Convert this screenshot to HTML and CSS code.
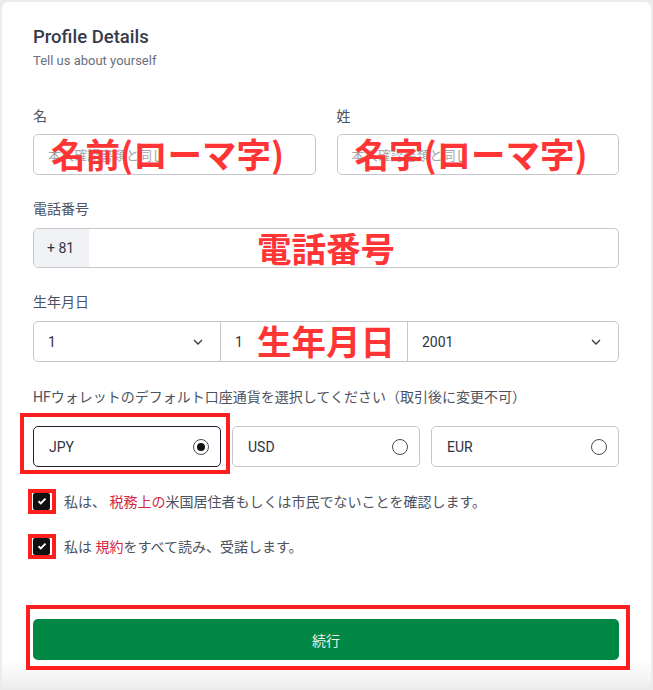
FILE: index.html
```html
<!DOCTYPE html>
<html>
<head>
  <meta charset="utf-8">
  <title>Profile Details</title>
  <link rel="stylesheet" href="styles.css">
</head>
<body>
  <div class="card">
    <h1 class="title">Profile Details</h1>
    <p class="subtitle">Tell us about yourself</p>

    <div class="row names">
      <div class="field">
        <label class="label">名</label>
        <div class="control">
          <span class="placeholder">本人確認書類と同じ</span>
          <span class="note note-first">名前(ローマ字)</span>
        </div>
      </div>
      <div class="field">
        <label class="label">姓</label>
        <div class="control">
          <span class="placeholder">本人確認書類と同じ</span>
          <span class="note note-last">名字(ローマ字)</span>
        </div>
      </div>
    </div>

    <div class="field phone-field">
      <label class="label">電話番号</label>
      <div class="control phone">
        <span class="prefix">+ 81</span>
        <span class="note note-phone">電話番号</span>
      </div>
    </div>

    <div class="field birth-field">
      <label class="label">生年月日</label>
      <div class="control birth">
        <div class="seg"><span>1</span><svg class="chev" viewBox="0 0 10 6"><path d="M1 1l4 4 4-4" /></svg></div>
        <div class="seg"><span>1</span><svg class="chev" viewBox="0 0 10 6"><path d="M1 1l4 4 4-4" /></svg></div>
        <div class="seg"><span>2001</span><svg class="chev" viewBox="0 0 10 6"><path d="M1 1l4 4 4-4" /></svg></div>
        <span class="note note-birth">生年月日</span>
      </div>
    </div>

    <div class="field currency-field">
      <label class="label">HFウォレットのデフォルト口座通貨を選択してください（取引後に変更不可）</label>
      <div class="currencies">
        <div class="option selected"><span>JPY</span><i class="radio"></i><span class="mark mark-jpy"></span></div>
        <div class="option"><span>USD</span><i class="radio"></i></div>
        <div class="option"><span>EUR</span><i class="radio"></i></div>
      </div>
    </div>

    <div class="check-row check-one">
      <span class="box"><svg viewBox="0 0 10 8"><path d="M1.5 4.2l2.3 2.2L8.5 1.6" /></svg><span class="mark mark-check"></span></span>
      <span class="check-text">私は、 <em>税務上の</em>米国居住者もしくは市民でないことを確認します。</span>
    </div>
    <div class="check-row">
      <span class="box"><svg viewBox="0 0 10 8"><path d="M1.5 4.2l2.3 2.2L8.5 1.6" /></svg><span class="mark mark-check"></span></span>
      <span class="check-text">私は <em>規約</em>をすべて読み、受諾します。</span>
    </div>

    <div class="submit-wrap">
      <button class="submit" type="button">続行</button>
      <span class="mark mark-button"></span>
    </div>
  </div>
</body>
</html>
```

FILE: styles.css
```css
* {
  box-sizing: border-box;
}
body {
  margin: 0;
  background-color: #ececec;
  font-family: Roboto, "Noto Sans CJK JP", sans-serif;
  width: 653px;
  height: 690px;
  overflow: hidden;
}
.card {
  margin: 2px 2px 0 2px;
  height: 686px;
  background: linear-gradient(to bottom, #ffffff 96%, #eeeeee 100%);
  border-radius: 6px;
  padding: 24px 32px 0 31px;
}
.title {
  margin: 0;
  font-size: 18.5px;
  font-weight: 500;
  line-height: 22px;
  color: #363a4a;
}
.subtitle {
  margin: 5px 0 0 0;
  font-size: 13px;
  line-height: 16px;
  color: #6a6f7b;
}
.label {
  display: block;
  font-size: 14px;
  line-height: 18px;
  color: #4d5260;
  margin-bottom: 10px;
}
.row {
  display: flex;
  gap: 21px;
}
.names {
  margin-top: 38px;
}
.names .label {
  margin-bottom: 9px;
}
.field {
  flex: 1;
}
.control {
  position: relative;
  height: 41px;
  border: 1px solid #c6c7cb;
  border-radius: 5px;
  display: flex;
  align-items: center;
  font-size: 14px;
  color: #2f3344;
}
.placeholder {
  padding-left: 14px;
  font-size: 13px;
  color: #a3a5ab;
}
.phone-field {
  margin-top: 25px;
}
.phone {
  height: 40px;
}
.prefix {
  width: 55px;
  height: 100%;
  background-color: #f0f2f5;
  border-radius: 4px 0 0 4px;
  display: flex;
  align-items: center;
  padding-left: 13px;
  font-family: Roboto, sans-serif;
}
.birth-field {
  margin-top: 25px;
}
.birth {
  height: 41px;
}
.seg {
  flex: 1;
  height: 100%;
  display: flex;
  align-items: center;
  justify-content: space-between;
  padding: 0 17px 0 14px;
  border-right: 1px solid #c6c7cb;
}
.seg:last-of-type {
  border-right: none;
  flex: 0 0 210px;
}
.chev {
  width: 10px;
  height: 6px;
  fill: none;
  stroke: #3a3d47;
  stroke-width: 1.4;
}
.currency-field {
  margin-top: 26px;
}
.currency-field .label {
  margin-bottom: 20px;
}
.currencies {
  display: flex;
  gap: 11px;
}
.option {
  position: relative;
  flex: 1;
  height: 41px;
  border: 1px solid #c6c7cb;
  border-radius: 5px;
  display: flex;
  align-items: center;
  justify-content: space-between;
  padding: 0 11px 0 15px;
  font-size: 14px;
  color: #2f3344;
}
.option.selected {
  border-color: #1f2230;
}
.radio {
  width: 16px;
  height: 16px;
  border: 1px solid #4a4d57;
  border-radius: 50%;
  display: flex;
  align-items: center;
  justify-content: center;
}
.selected .radio::after {
  content: "";
  width: 8px;
  height: 8px;
  border-radius: 50%;
  background-color: #111;
}
.check-row {
  display: flex;
  align-items: center;
  gap: 14px;
  margin-top: 25px;
  height: 18px;
}
.check-row + .check-row {
  margin-top: 27px;
}
.box {
  position: relative;
  width: 17px;
  height: 17px;
  background-color: #111;
  border-radius: 2px;
  display: flex;
  align-items: center;
  justify-content: center;
}
.box svg {
  width: 10px;
  height: 8px;
  fill: none;
  stroke: #fff;
  stroke-width: 2;
}
.check-text {
  font-size: 14px;
  color: #4d5260;
}
.check-text em {
  font-style: normal;
  color: #d3263f;
}
.submit-wrap {
  position: relative;
  margin-top: 64px;
}
.submit {
  display: block;
  width: 100%;
  height: 41px;
  border: none;
  border-radius: 5px;
  background-color: #008744;
  color: #e6f2ea;
  font-size: 14px;
  font-family: "Noto Sans CJK JP", sans-serif;
}
.note {
  position: absolute;
  color: #ff3535;
  font-family: "Noto Sans CJK JP", sans-serif;
  font-weight: 700;
  font-size: 34.5px;
  line-height: 34px;
  top: 1px;
  white-space: nowrap;
}
.note-first {
  left: 17px;
}
.note-last {
  left: 17px;
}
.note-phone {
  left: 223px;
}
.note-birth {
  left: 223px;
}
.mark {
  position: absolute;
  border: 4px solid #ff1e1e;
}
.mark-jpy {
  left: -14px;
  top: -14px;
  right: -10px;
  bottom: -8px;
}
.mark-check {
  left: -5px;
  top: -4px;
  right: -6px;
  bottom: -4px;
}
.mark-button {
  left: -7px;
  top: -14px;
  right: -11px;
  bottom: -10px;
}
```
